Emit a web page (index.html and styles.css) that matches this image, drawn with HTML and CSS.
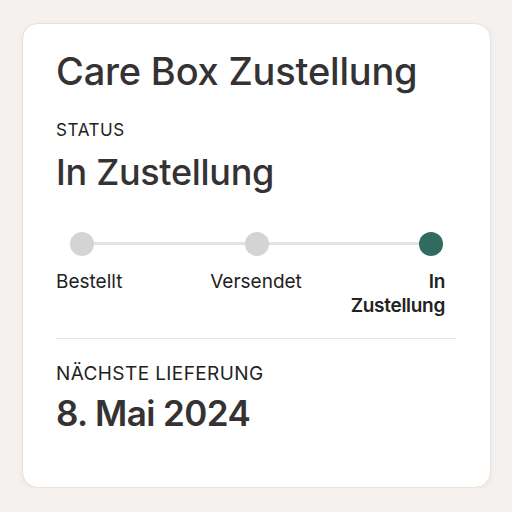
FILE: index.html
```html
<!DOCTYPE html>
<html lang="de">
<head>
<meta charset="utf-8">
<link rel="stylesheet" href="styles.css">
</head>
<body>
<div class="card">
  <h1 class="title">Care Box Zustellung</h1>
  <div class="label">STATUS</div>
  <div class="status">In Zustellung</div>
  <div class="track">
    <div class="line"></div>
    <span class="dot"></span>
    <span class="dot"></span>
    <span class="dot active"></span>
  </div>
  <div class="steps">
    <div class="step first">Bestellt</div>
    <div class="step mid">Versendet</div>
    <div class="step last">In<br>Zustellung</div>
  </div>
  <hr class="divider">
  <div class="label next">NÄCHSTE LIEFERUNG</div>
  <div class="date">8. Mai 2024</div>
</div>
</body>
</html>
```
FILE: styles.css
```css
html, body {
  margin: 0;
  padding: 0;
  background: #f4f1ef;
}
body {
  font-family: Inter, "Liberation Sans", sans-serif;
  color: #353234;
}
.card {
  margin: 23px 0 0 22px;
  width: 469px;
  height: 465px;
  box-sizing: border-box;
  background: #fff;
  border: 1px solid #e6e2df;
  border-radius: 16px;
  box-shadow: 0 2px 6px rgba(0,0,0,0.05);
  padding: 24px 34px 0 33px;
}
.title {
  margin: 0;
  font-size: 38px;
  font-weight: 500;
  line-height: 46px;
  letter-spacing: -0.2px;
}
.label {
  margin-top: 26px;
  font-size: 17px;
  font-weight: 400;
  line-height: 20px;
  letter-spacing: 0.6px;
  color: #222;
}
.status {
  margin-top: 11px;
  font-size: 36px;
  font-weight: 500;
  line-height: 42px;
  letter-spacing: -0.3px;
}
.track {
  position: relative;
  display: flex;
  justify-content: space-between;
  margin: 39px 13px 0 14px;
  height: 24px;
  align-items: center;
}
.line {
  position: absolute;
  left: 12px;
  right: 12px;
  top: 10px;
  height: 3px;
  background: #e4e2e2;
}
.dot {
  position: relative;
  width: 24px;
  height: 24px;
  border-radius: 50%;
  background: #d5d4d5;
}
.dot.active {
  background: #2f6b5e;
}
.steps {
  display: grid;
  grid-template-columns: 1fr 1fr 1fr;
  margin-top: 14px;
  font-size: 19px;
  line-height: 24px;
  color: #222;
}
.step.mid {
  text-align: center;
}
.step.last {
  text-align: right;
  padding-right: 11px;
  font-weight: 600;
  letter-spacing: -0.3px;
}
.divider {
  border: none;
  height: 1px;
  background: #e6e4e4;
  margin: 20px 0 0 0;
}
.label.next {
  margin-top: 24px;
  font-size: 19px;
  line-height: 22px;
  letter-spacing: 0.4px;
}
.date {
  margin-top: 7px;
  font-size: 35px;
  font-weight: 600;
  line-height: 42px;
  letter-spacing: -0.6px;
}
```
